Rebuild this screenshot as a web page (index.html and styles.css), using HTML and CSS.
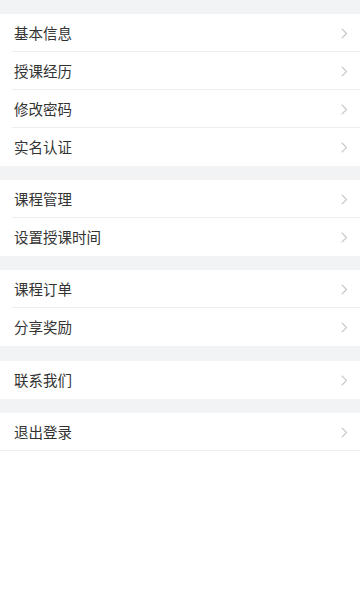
FILE: index.html
```html
<!DOCTYPE html>
<html lang="zh">
<head>
<meta charset="utf-8">
<title>设置</title>
<link rel="stylesheet" href="styles.css">
</head>
<body>
<div class="page">
  <div class="gap"></div>
  <ul class="group">
    <li class="row"><span class="label">基本信息</span><svg class="chev" viewBox="0 0 7 11"><path d="M1 1l4.5 4.5L1 10"/></svg></li>
    <li class="row"><span class="label">授课经历</span><svg class="chev" viewBox="0 0 7 11"><path d="M1 1l4.5 4.5L1 10"/></svg></li>
    <li class="row"><span class="label">修改密码</span><svg class="chev" viewBox="0 0 7 11"><path d="M1 1l4.5 4.5L1 10"/></svg></li>
    <li class="row"><span class="label">实名认证</span><svg class="chev" viewBox="0 0 7 11"><path d="M1 1l4.5 4.5L1 10"/></svg></li>
  </ul>
  <div class="gap"></div>
  <ul class="group">
    <li class="row"><span class="label">课程管理</span><svg class="chev" viewBox="0 0 7 11"><path d="M1 1l4.5 4.5L1 10"/></svg></li>
    <li class="row"><span class="label">设置授课时间</span><svg class="chev" viewBox="0 0 7 11"><path d="M1 1l4.5 4.5L1 10"/></svg></li>
  </ul>
  <div class="gap"></div>
  <ul class="group">
    <li class="row"><span class="label">课程订单</span><svg class="chev" viewBox="0 0 7 11"><path d="M1 1l4.5 4.5L1 10"/></svg></li>
    <li class="row"><span class="label">分享奖励</span><svg class="chev" viewBox="0 0 7 11"><path d="M1 1l4.5 4.5L1 10"/></svg></li>
  </ul>
  <div class="gap gap-wide"></div>
  <ul class="group">
    <li class="row"><span class="label">联系我们</span><svg class="chev" viewBox="0 0 7 11"><path d="M1 1l4.5 4.5L1 10"/></svg></li>
  </ul>
  <div class="gap"></div>
  <ul class="group group-last">
    <li class="row"><span class="label">退出登录</span><svg class="chev" viewBox="0 0 7 11"><path d="M1 1l4.5 4.5L1 10"/></svg></li>
  </ul>
</div>
</body>
</html>
```

FILE: styles.css
```css
html, body {
  margin: 0;
  padding: 0;
  background: #ffffff;
}
body {
  font-family: "Noto Sans CJK SC", "Noto Sans", sans-serif;
  color: #333333;
}
.page {
  width: 360px;
  display: flex;
  flex-direction: column;
}
.gap {
  height: 14px;
  background: #f2f3f5;
}
.gap-wide {
  height: 15px;
}
.group {
  list-style: none;
  margin: 0;
  padding: 0;
  background: #ffffff;
}
.row {
  position: relative;
  height: 38px;
  display: flex;
  align-items: center;
  justify-content: space-between;
  padding: 0 12px 0 14px;
  box-sizing: border-box;
}
.row::after {
  content: "";
  position: absolute;
  left: 12px;
  right: 0;
  bottom: 0;
  height: 1px;
  background: #eeeeee;
}
.group .row:last-child::after {
  display: none;
}
.group-last .row:last-child::after {
  display: block;
  left: 0;
}
.label {
  font-size: 14.5px;
  line-height: 20px;
  color: #333333;
}
.chev {
  width: 7px;
  height: 11px;
  fill: none;
  stroke: #c8c9cc;
  stroke-width: 1.1;
  stroke-linecap: round;
  stroke-linejoin: round;
}
```
